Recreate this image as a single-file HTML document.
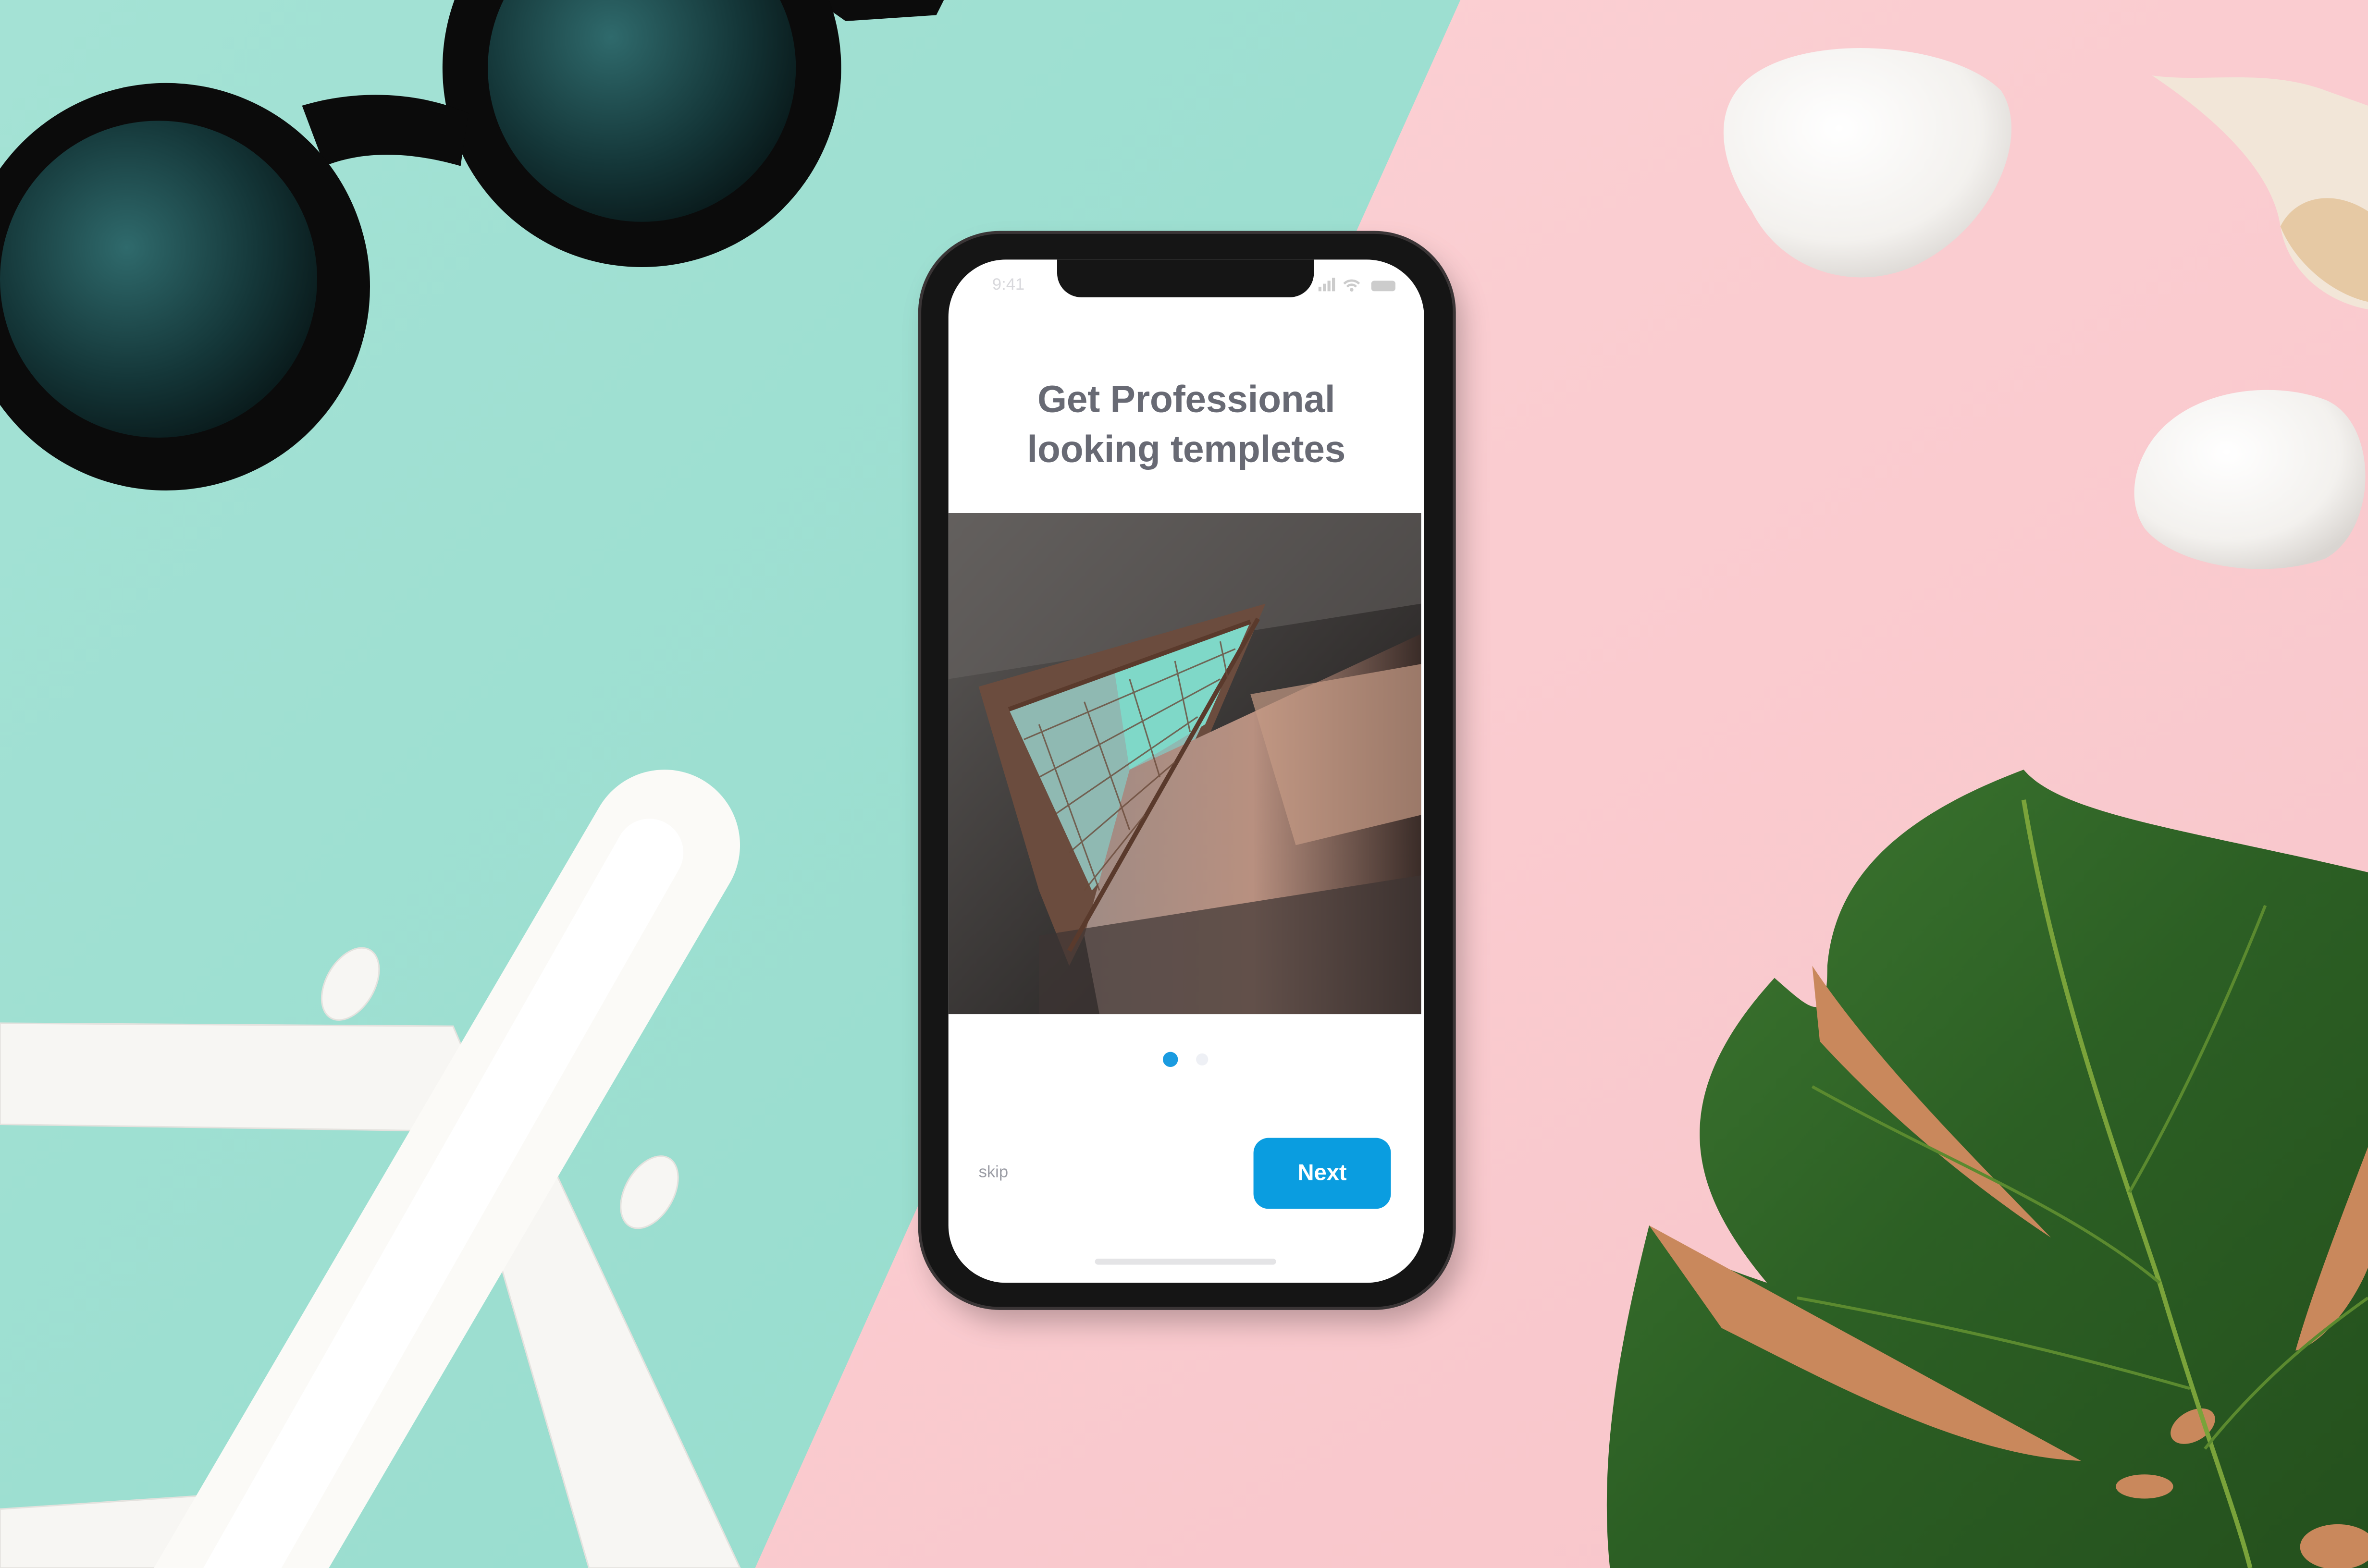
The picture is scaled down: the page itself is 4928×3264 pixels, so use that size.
<!DOCTYPE html>
<html><head><meta charset="utf-8">
<style>
html{overflow:hidden;}
html,body{margin:0;padding:0;width:4928px;height:3264px;overflow:hidden;background:#fbcfd3;}
#w{position:absolute;left:0;top:0;width:1568px;height:1039px;transform-origin:0 0;transform:scale(3.14286,3.14149);overflow:hidden;font-family:"Liberation Sans",sans-serif;}
svg{position:absolute;left:0;top:0;}
.phone{position:absolute;left:610px;top:155px;width:352px;height:711px;border-radius:52px;background:#151515;box-shadow:0 0 0 2px #3a3536,6px 10px 18px rgba(0,0,0,.25);}
.screen{position:absolute;left:18px;top:17px;width:315px;height:678px;border-radius:38px;background:#fff;overflow:hidden;}
.notch{position:absolute;left:72px;top:0;width:170px;height:25px;background:#151515;border-radius:0 0 16px 16px;}
.title{position:absolute;left:0;top:77px;width:315px;text-align:center;font-weight:bold;font-size:25px;line-height:33px;color:#686a74;letter-spacing:-.1px;}
.photo{position:absolute;left:0;top:168px;width:313px;height:332px;background:#3a3635;overflow:hidden;}
.next{position:absolute;left:202px;top:582px;width:91px;height:47px;border-radius:10px;background:#0a9de0;color:#fff;font-weight:bold;font-size:15px;line-height:47px;text-align:center;}
</style></head><body>
<div id="w">
<svg width="1568" height="1039" viewBox="0 0 1568 1039">
<defs>
<linearGradient id="tg" x1="0" y1="0" x2="1" y2="1"><stop offset="0" stop-color="#a4e2d5"/><stop offset="1" stop-color="#96dccd"/></linearGradient>
<linearGradient id="pg" x1="0" y1="0" x2="1" y2="1"><stop offset="0" stop-color="#fcd3d6"/><stop offset="1" stop-color="#f8c5ca"/></linearGradient>
<radialGradient id="lens" cx=".4" cy=".4" r=".7"><stop offset="0" stop-color="#2f6a6c"/><stop offset=".6" stop-color="#143638"/><stop offset="1" stop-color="#071415"/></radialGradient>
<radialGradient id="stone" cx=".4" cy=".35" r=".7"><stop offset="0" stop-color="#ffffff"/><stop offset=".7" stop-color="#f3f1ee"/><stop offset="1" stop-color="#d9d5d1"/></radialGradient>
<linearGradient id="leaf" x1="0" y1="0" x2="1" y2="1"><stop offset="0" stop-color="#3f7a32"/><stop offset=".5" stop-color="#2c5f24"/><stop offset="1" stop-color="#24501d"/></linearGradient>
</defs>
<rect width="1568" height="1039" fill="url(#pg)"/>
<polygon points="0,0 967,0 500,1039 0,1039" fill="url(#tg)"/>
<!-- sunglasses -->
<path d="M540,0 L625,0 L620,10 L560,14 Z" fill="#0c0c0c"/>
<circle cx="425" cy="45" r="132" fill="#0b0b0b"/>
<circle cx="425" cy="45" r="102" fill="url(#lens)"/>
<path d="M200,70 C240,58 280,62 310,75 L305,110 C270,100 240,100 215,110 Z" fill="#0b0b0b"/>
<circle cx="110" cy="190" r="135" fill="#0b0b0b"/>
<circle cx="105" cy="185" r="105" fill="url(#lens)"/>
<!-- stones & shell -->
<path d="M1150,60 C1180,20 1290,25 1325,60 C1345,90 1320,150 1270,175 C1230,195 1180,180 1160,140 C1140,110 1135,80 1150,60 Z" fill="url(#stone)"/>
<path d="M1420,300 C1440,260 1500,250 1540,265 C1575,280 1575,350 1540,370 C1500,385 1440,375 1420,350 C1410,335 1412,315 1420,300 Z" fill="url(#stone)"/>
<path d="M1425,50 C1460,55 1500,45 1540,60 L1568,70 L1568,205 C1540,200 1515,180 1510,150 C1505,115 1470,80 1425,50 Z" fill="#f2e6d8"/>
<path d="M1510,150 C1520,175 1545,195 1568,200 L1568,140 C1545,125 1520,130 1510,150 Z" fill="#e6c9a4"/>
<!-- plane -->
<g fill="#f7f6f3" stroke="#e4e2de" stroke-width="1">
<polygon points="0,678 300,680 330,750 0,745"/>
<polygon points="300,730 360,760 490,1039 390,1039"/>
<polygon points="0,1000 150,990 140,1039 0,1039"/>
<ellipse cx="232" cy="652" rx="16" ry="26" transform="rotate(30 232 652)"/>
<ellipse cx="430" cy="790" rx="16" ry="26" transform="rotate(30 430 790)"/>
</g>
<line x1="440" y1="560" x2="130" y2="1090" stroke="#fbfaf7" stroke-width="100" stroke-linecap="round"/>
<line x1="430" y1="565" x2="140" y2="1075" stroke="#ffffff" stroke-width="45" stroke-linecap="round"/>
<!-- leaf -->
<path d="M1340,510 C1365,540 1450,550 1568,578 L1568,1039 L1066,1039 C1058,960 1075,880 1092,812 C1115,830 1140,840 1170,850 C1120,790 1100,730 1175,648 C1200,670 1210,680 1210,640 C1215,580 1260,540 1340,510 Z" fill="url(#leaf)"/>
<path d="M1200,640 C1240,700 1300,760 1358,820 C1320,795 1260,750 1205,690 Z" fill="#c9885c"/>
<path d="M1092,812 C1180,860 1290,920 1378,968 C1300,965 1210,915 1140,880 Z" fill="#c9885c"/>
<path d="M1568,760 C1545,820 1530,860 1520,895 C1540,890 1560,860 1568,840 Z" fill="#c9885c"/>
<ellipse cx="1452" cy="945" rx="16" ry="10" fill="#c9885c" transform="rotate(-30 1452 945)"/>
<ellipse cx="1420" cy="985" rx="19" ry="8" fill="#c9885c"/>
<ellipse cx="1548" cy="1025" rx="25" ry="15" fill="#c9885c"/>
<path d="M1340,530 C1360,650 1400,760 1430,850 C1460,950 1480,1000 1490,1039" stroke="#7aa33a" stroke-width="3" fill="none"/>
<path d="M1430,850 C1370,800 1290,770 1200,720 M1450,920 C1380,900 1300,880 1190,860 M1410,790 C1450,720 1480,650 1500,600 M1460,960 C1500,910 1540,880 1568,860" stroke="#5b8a2f" stroke-width="2" fill="none"/>
</svg>
<div class="phone">
 <div class="screen">
  <div class="notch"></div>
  <div style="position:absolute;left:29px;top:11px;font-size:11px;color:#d8d8dc;">9:41</div>
  <svg style="left:245px;top:12px" width="60" height="12"><rect x="0" y="6" width="2" height="3" fill="#ccc"/><rect x="3" y="4" width="2" height="5" fill="#ccc"/><rect x="6" y="2" width="2" height="7" fill="#ccc"/><rect x="9" y="0" width="2" height="9" fill="#ccc"/><path d="M17,4 A7,7 0 0 1 27,4 M19,6 A4,4 0 0 1 25,6" stroke="#ccc" stroke-width="1.5" fill="none"/><circle cx="22" cy="8" r="1.2" fill="#ccc"/><rect x="35" y="2" width="16" height="7" rx="2" fill="#ccc"/></svg>
  <div class="title">Get Professional<br>looking templetes</div>
  <div class="photo">
   <svg width="313" height="332" viewBox="0 0 313 332">
    <defs>
     <linearGradient id="wall" x1="0" y1="0" x2="1" y2="1"><stop offset="0" stop-color="#5d5a58"/><stop offset=".6" stop-color="#33302f"/><stop offset="1" stop-color="#151313"/></linearGradient>
     <linearGradient id="st" x1="0" y1="0" x2="1" y2="0"><stop offset="0" stop-color="#a08b84"/><stop offset=".5" stop-color="#b89080"/><stop offset="1" stop-color="#3a2c28"/></linearGradient>
    </defs>
    <rect width="313" height="332" fill="url(#wall)"/>
    <polygon points="0,0 313,0 313,60 0,110" fill="#6a6664" opacity=".5"/>
    <polygon points="20,115 210,60 150,200 100,260 80,300 60,250" fill="#6b4c3e"/>
    <polygon points="40,130 200,72 140,200 95,250" fill="#8fb9b2"/>
    <polygon points="110,105 200,72 170,140 120,170" fill="#7fd8c8"/>
    <polygon points="120,170 313,80 313,332 100,332 90,280" fill="url(#st)"/>
    <polygon points="200,120 313,100 313,200 230,220" fill="#c49a85" opacity=".7"/>
    <polygon points="60,280 313,240 313,332 60,332" fill="#3d3533" opacity=".7"/>
    <path d="M40,130 L200,72 M80,290 L205,70" stroke="#5a3a2c" stroke-width="3" fill="none"/>
    <g stroke="#6a4a3a" stroke-width="1" fill="none" opacity=".8">
     <path d="M50,150 L190,90 M60,175 L180,110 M70,200 L165,135 M80,225 L150,165 M90,250 L130,200"/>
     <path d="M60,140 L100,250 M90,125 L120,210 M120,110 L140,175 M150,98 L160,145 M180,85 L185,110"/>
    </g>
   </svg>
  </div>
  <div style="position:absolute;left:142px;top:525px;width:10px;height:10px;border-radius:50%;background:#1a9be0;"></div>
  <div style="position:absolute;left:164px;top:526px;width:8px;height:8px;border-radius:50%;background:#eef0f5;"></div>
  <div style="position:absolute;left:20px;top:599px;font-size:11px;color:#9a9ca4;">skip</div>
  <div class="next">Next</div>
  <div style="position:absolute;left:97px;top:662px;width:120px;height:4px;border-radius:2px;background:#e4e4e6;"></div>
 </div>
</div>
</div>
</body></html>
